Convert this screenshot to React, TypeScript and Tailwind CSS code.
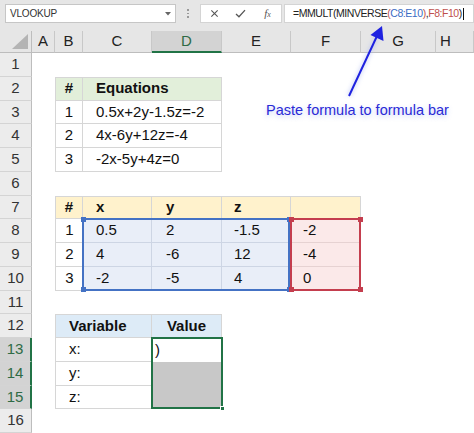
import React from "react";

const W = { A: 23, B: 28, C: 69, D: 70, E: 69, F: 70, G: 75, H: 38 };
const RH = "h-[23.75px]";

type CellDef = { w: number; cls?: string; content?: React.ReactNode };

const grid = "border-[#d6d6d6]";

function Row({ n, cells, hl }: { n: number; cells: CellDef[]; hl?: boolean }) {
  return (
    <div className={`flex ${RH}`}>
      <div
        className={`w-[32px] shrink-0 flex items-center justify-center border-b border-[#d4d4d4] text-[15px] ${
          hl
            ? "bg-[#d3d3d3] text-[#2e6b45] border-r-2 border-r-[#217346]"
            : "bg-[#ececec] text-[#333] border-r border-r-[#bdbdbd]"
        }`}
      >
        {n}
      </div>
      {cells.map((c, i) => (
        <div
          key={i}
          style={{ width: c.w }}
          className={`shrink-0 flex items-center text-[15px] text-[#111] whitespace-nowrap ${c.cls ?? ""}`}
        >
          {c.content}
        </div>
      ))}
    </div>
  );
}

const blank = (): CellDef[] => [
  { w: W.A + W.B + W.C + W.D + W.E + W.F + W.G + W.H },
];

function t1(
  b: React.ReactNode,
  cd: React.ReactNode,
  first = false,
  header = false
): CellDef[] {
  const bg = header ? "bg-[#e2efda] font-bold" : "bg-white";
  const top = first ? "border-t" : "";
  return [
    { w: W.A },
    { w: W.B, cls: `${bg} ${grid} border-l border-r border-b ${top} justify-center`, content: b },
    { w: W.C + W.D, cls: `${bg} ${grid} border-r border-b ${top} pl-[13px]`, content: cd },
    { w: W.E + W.F + W.G + W.H },
  ];
}

function t2(vals: React.ReactNode[], header = false, last = false): CellDef[] {
  const top = header ? "border-t" : "";
  if (header) {
    const h = `bg-[#fff2cc] font-bold ${grid} border-r border-b border-t`;
    return [
      { w: W.A },
      { w: W.B, cls: `${h} border-l justify-center`, content: vals[0] },
      { w: W.C, cls: `${h} pl-[13px]`, content: vals[1] },
      { w: W.D, cls: `${h} pl-[14px]`, content: vals[2] },
      { w: W.E, cls: `${h} pl-[12px]`, content: vals[3] },
      { w: W.F, cls: `${h}`, content: vals[4] },
      { w: W.G + W.H },
    ];
  }
  const b = last ? "" : "border-b";
  return [
    { w: W.A },
    { w: W.B, cls: `bg-white ${grid} border-l border-b ${top} justify-center`, content: vals[0] },
    { w: W.C, cls: `bg-[#e9eef8] border-[#cdd5e4] border-r ${b} pl-[13px]`, content: vals[1] },
    { w: W.D, cls: `bg-[#e9eef8] border-[#cdd5e4] border-r ${b} pl-[14px]`, content: vals[2] },
    { w: W.E, cls: `bg-[#e9eef8] border-[#cdd5e4] ${b} pl-[12px]`, content: vals[3] },
    { w: W.F, cls: `bg-[#fbe9e9] border-[#e6d2d2] ${b} pl-[12px]`, content: vals[4] },
    { w: W.G + W.H },
  ];
}

function t3(a: React.ReactNode, d: React.ReactNode, kind: "h" | "x" | "g"): CellDef[] {
  if (kind === "h") {
    const h = `bg-[#ddebf7] font-bold ${grid} border-b border-t`;
    return [
      { w: W.A },
      { w: W.B + W.C, cls: `${h} border-l border-r pl-[13px]`, content: a },
      { w: W.D, cls: `${h} border-r justify-center`, content: d },
      { w: W.E + W.F + W.G + W.H },
    ];
  }
  return [
    { w: W.A },
    { w: W.B + W.C, cls: `bg-white ${grid} border-l border-r border-b pl-[13px]`, content: a },
    {
      w: W.D,
      cls: kind === "g" ? "bg-[#c8c8c8]" : "bg-white pl-[3px]",
      content: d,
    },
    { w: W.E + W.F + W.G + W.H },
  ];
}

function ColHeader() {
  const cols: [string, number][] = [
    ["A", W.A],
    ["B", W.B],
    ["C", W.C],
    ["D", W.D],
    ["E", W.E],
    ["F", W.F],
    ["G", W.G],
    ["H", W.H],
  ];
  return (
    <div className="flex h-[22px]">
      <div className="w-[32px] shrink-0 bg-[#e6e6e6] border-r border-b border-[#bdbdbd] flex items-end justify-end pr-[3px] pb-[3px]">
        <svg width="16" height="15" viewBox="0 0 16 15">
          <polygon points="16,0 16,15 0,15" fill="#b4b4b4" />
        </svg>
      </div>
      {cols.map(([l, w]) => {
        const sel = l === "D";
        return (
          <div
            key={l}
            style={{ width: w }}
            className={`shrink-0 flex items-center text-[15px] border-r border-[#c8c8c8] ${
              l === "H" ? "justify-start pl-[4px]" : "justify-center"
            } ${
              sel
                ? "bg-[#d3d3d3] text-[#2e6b45] border-b-2 border-b-[#217346]"
                : "bg-[#e6e6e6] text-[#222] border-b border-b-[#bdbdbd]"
            }`}
          >
            {l}
          </div>
        );
      })}
    </div>
  );
}

function FormulaBar() {
  return (
    <div className="h-[31px] bg-[#e6e6e6] flex items-start pt-[4px] pl-[5px]">
      <div className="w-[171px] h-[19px] bg-white border border-[#c6c6c6] flex items-center justify-between pl-[4px] pr-[4px]">
        <span className="text-[10px] text-[#333] tracking-[-0.2px]">VLOOKUP</span>
        <svg width="6" height="4" viewBox="0 0 6 4">
          <polygon points="0,0 6,0 3,3.5" fill="#666" />
        </svg>
      </div>
      <div className="w-[24px] h-[19px] flex flex-col items-center justify-center gap-[2px]">
        <div className="w-[1.5px] h-[1.5px] bg-[#999]" />
        <div className="w-[1.5px] h-[1.5px] bg-[#999]" />
        <div className="w-[1.5px] h-[1.5px] bg-[#999]" />
      </div>
      <div className="w-[82px] h-[19px] bg-white border border-[#d4d4d4] flex items-center">
        <div className="w-[26px] flex justify-center">
          <svg width="9" height="9" viewBox="0 0 10 10">
            <path d="M1.5 1.5 L8.5 8.5 M8.5 1.5 L1.5 8.5" stroke="#555" strokeWidth="1.2" />
          </svg>
        </div>
        <div className="w-[27px] flex justify-center">
          <svg width="11" height="9" viewBox="0 0 12 10">
            <path d="M1 5.5 L4.3 8.6 L11 1.2" stroke="#555" strokeWidth="1.4" fill="none" />
          </svg>
        </div>
        <div className="w-[27px] flex justify-center">
          <span className="text-[11px] italic text-[#555] font-['Liberation_Serif',serif]">
            f<span className="text-[8px]">x</span>
          </span>
        </div>
      </div>
      <div className="ml-[2px] flex-1 h-[19px] bg-white border border-[#d4d4d4] flex items-center pl-[8px]">
        <span className="text-[10.5px] tracking-[-0.45px] text-[#222] whitespace-nowrap">
          =MMULT(MINVERSE<span className="text-[#c0504d]">(</span>
          <span className="text-[#3b6cc4]">C8:E10</span>
          <span className="text-[#c0504d]">)</span>,<span className="text-[#c0504d]">F8:F10</span>)
        </span>
        <span className="w-px h-[12px] bg-[#111] ml-[1px]" />
      </div>
    </div>
  );
}

const handle = "absolute w-[5px] h-[5px]";

export default function App() {
  const top8 = 22 + 7 * 23.75;
  const top13 = 22 + 12 * 23.75;
  const h3 = 3 * 23.75;
  return (
    <div className="relative w-[474px] h-[433px] overflow-hidden bg-white font-['Liberation_Sans',Arial,sans-serif]">
      <FormulaBar />
      <div className="relative">
        <ColHeader />
        <Row n={1} cells={blank()} />
        <Row n={2} cells={t1("#", "Equations", true, true)} />
        <Row n={3} cells={t1("1", "0.5x+2y-1.5z=-2")} />
        <Row n={4} cells={t1("2", "4x-6y+12z=-4")} />
        <Row n={5} cells={t1("3", "-2x-5y+4z=0")} />
        <Row n={6} cells={blank()} />
        <Row n={7} cells={t2(["#", "x", "y", "z", ""], true)} />
        <Row n={8} cells={t2(["1", "0.5", "2", "-1.5", "-2"])} />
        <Row n={9} cells={t2(["2", "4", "-6", "12", "-4"])} />
        <Row n={10} cells={t2(["3", "-2", "-5", "4", "0"], false, true)} />
        <Row n={11} cells={blank()} />
        <Row n={12} cells={t3("Variable", "Value", "h")} />
        <Row n={13} hl cells={t3("x:", ")", "x")} />
        <Row n={14} hl cells={t3("y:", "", "g")} />
        <Row n={15} hl cells={t3("z:", "", "g")} />
        <Row n={16} cells={blank()} />

        {/* blue range C8:E10 */}
        <div
          className="absolute border-2 border-[#4472c4] pointer-events-none"
          style={{ left: 82, top: top8 - 1, width: 208, height: h3 + 1 }}
        >
          <div className={`${handle} bg-[#4472c4] -left-[3.5px] -top-[3.5px]`} />
          <div className={`${handle} bg-[#4472c4] -right-[3.5px] -top-[3.5px]`} />
          <div className={`${handle} bg-[#4472c4] -left-[3.5px] -bottom-[3.5px]`} />
          <div className={`${handle} bg-[#4472c4] -right-[3.5px] -bottom-[3.5px]`} />
        </div>
        {/* red range F8:F10 */}
        <div
          className="absolute border-2 border-[#c43e4e] pointer-events-none"
          style={{ left: 290, top: top8 - 1, width: 71, height: h3 + 1 }}
        >
          <div className={`${handle} bg-[#c43e4e] -left-[3.5px] -top-[3.5px]`} />
          <div className={`${handle} bg-[#c43e4e] -right-[3.5px] -top-[3.5px]`} />
          <div className={`${handle} bg-[#c43e4e] -left-[3.5px] -bottom-[3.5px]`} />
          <div className={`${handle} bg-[#c43e4e] -right-[3.5px] -bottom-[3.5px]`} />
        </div>
        {/* green selection D13:D15 */}
        <div
          className="absolute border-2 border-[#217346] pointer-events-none"
          style={{ left: 151, top: top13 - 1, width: 72, height: h3 + 1 }}
        >
          <div className={`${handle} bg-[#217346] border border-white -right-[4px] -bottom-[4px]`} />
        </div>
      </div>

      {/* annotation */}
      <svg
        className="absolute left-0 top-0 pointer-events-none"
        width="474"
        height="433"
        viewBox="0 0 474 433"
      >
        <defs>
          <filter id="glow" x="-50%" y="-50%" width="200%" height="200%">
            <feGaussianBlur stdDeviation="2" />
          </filter>
        </defs>
        <line x1="349" y1="96" x2="377" y2="36" stroke="#aab8f0" strokeWidth="4" opacity="0.5" filter="url(#glow)" />
        <line x1="349" y1="96" x2="377" y2="36" stroke="#1f22e0" strokeWidth="2" />
        <polygon points="382,26 383.5,41 370.5,35" fill="#1f22e0" />
      </svg>
      <div className="absolute left-[266px] top-[100px] text-[14.5px] text-[#2a2ad6] whitespace-nowrap [text-shadow:0_2px_5px_rgba(90,120,230,0.35)]">
        Paste formula to formula bar
      </div>
    </div>
  );
}
